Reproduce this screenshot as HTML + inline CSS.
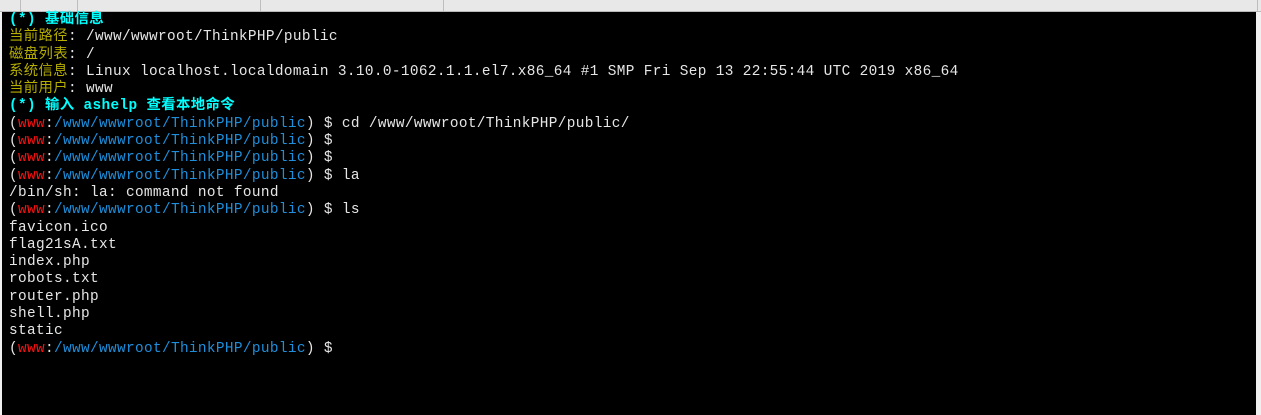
<!DOCTYPE html>
<html><head><meta charset="utf-8"><style>
html,body{margin:0;padding:0;width:1261px;height:415px;overflow:hidden;background:#f0f0f0;}
#top{position:absolute;left:0;top:0;width:1261px;height:11px;background:#e8e8e8;border-bottom:1px solid #b8b8b8;}
.v{position:absolute;top:0;height:11px;width:1px;background:#bdbdbd;}
#term{position:absolute;left:2px;top:12px;width:1254px;height:403px;background:#000;}
pre{position:absolute;left:9px;top:12px;margin:0;font-family:"Liberation Mono","Noto Sans CJK SC",monospace;font-size:14.4px;letter-spacing:0.36px;line-height:17.3px;color:#e6e6e6;}
.c{color:#00ffff;font-weight:bold}
.y{color:#b5ad00}
.r{color:#ff1010}
.b{color:#1e8fdc}
</style></head><body>
<div id="top"><div class="v" style="left:20px"></div><div class="v" style="left:77px"></div><div class="v" style="left:260px"></div><div class="v" style="left:443px"></div><div class="v" style="left:1257px"></div></div>
<div id="term"></div>
<pre><span class="c">(*) 基础信息</span>
<span class="y">当前路径</span>: /www/wwwroot/ThinkPHP/public
<span class="y">磁盘列表</span>: /
<span class="y">系统信息</span>: Linux localhost.localdomain 3.10.0-1062.1.1.el7.x86_64 #1 SMP Fri Sep 13 22:55:44 UTC 2019 x86_64
<span class="y">当前用户</span>: www
<span class="c">(*) 输入 ashelp 查看本地命令</span>
(<span class="r">www</span>:<span class="b">/www/wwwroot/ThinkPHP/public</span>) $ cd /www/wwwroot/ThinkPHP/public/
(<span class="r">www</span>:<span class="b">/www/wwwroot/ThinkPHP/public</span>) $
(<span class="r">www</span>:<span class="b">/www/wwwroot/ThinkPHP/public</span>) $
(<span class="r">www</span>:<span class="b">/www/wwwroot/ThinkPHP/public</span>) $ la
/bin/sh: la: command not found
(<span class="r">www</span>:<span class="b">/www/wwwroot/ThinkPHP/public</span>) $ ls
favicon.ico
flag21sA.txt
index.php
robots.txt
router.php
shell.php
static
(<span class="r">www</span>:<span class="b">/www/wwwroot/ThinkPHP/public</span>) $</pre>
</body></html>
